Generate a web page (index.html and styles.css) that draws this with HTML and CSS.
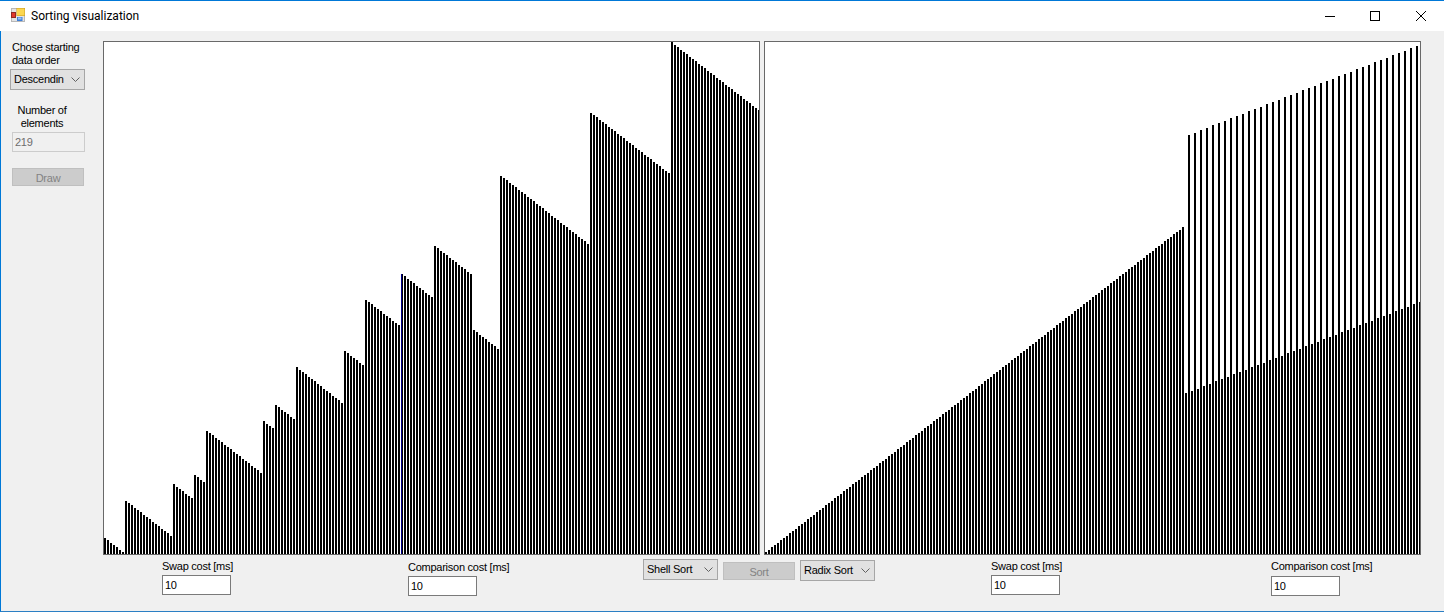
FILE: index.html
```html
<!DOCTYPE html>
<html lang="en">
<head>
<meta charset="utf-8">
<title>Sorting visualization</title>
<link rel="stylesheet" href="styles.css">
</head>
<body>
<div class="window">
  <header class="titlebar">
    <svg class="app-icon" width="16" height="16" viewBox="0 0 16 16">
      <rect x="1" y="1" width="14" height="14" fill="#b8b8b8"/>
      <rect x="2" y="2" width="12" height="12" fill="#e4e4e4"/>
      <rect x="6.5" y="1" width="8.5" height="8" fill="#c89a20"/>
      <rect x="7" y="1.5" width="7.5" height="7" fill="#fbd64f"/>
      <rect x="1" y="5" width="5" height="6" fill="#8e2a22"/>
      <rect x="2" y="6" width="3" height="4" fill="#e0382c"/>
      <rect x="7" y="10" width="5.5" height="4" fill="#3d7fd9"/>
      <rect x="8" y="10.5" width="3.5" height="2" fill="#9cc4f2"/>
    </svg>
    <span class="title">Sorting visualization</span>
    <div class="caption-buttons">
      <svg width="12" height="12" viewBox="0 0 12 12"><path d="M1 6.5H11" stroke="#000" stroke-width="1" fill="none"/></svg>
      <svg width="12" height="12" viewBox="0 0 12 12"><rect x="1.5" y="1.5" width="9" height="9" stroke="#000" stroke-width="1" fill="none"/></svg>
      <svg width="12" height="12" viewBox="0 0 12 12"><path d="M1 1L11 11M11 1L1 11" stroke="#000" stroke-width="1" fill="none"/></svg>
    </div>
  </header>
  <div class="client">
    <aside class="sidebar">
      <div class="label start-label">Chose starting<br>data order</div>
      <div class="combo order-combo"><span>Descendin</span><svg width="9" height="5" viewBox="0 0 9 5"><path d="M0.5 0.5L4.5 4.5L8.5 0.5" stroke="#606060" fill="none"/></svg></div>
      <div class="label count-label">Number of<br>elements</div>
      <input class="textbox count-box" value="219" disabled>
      <button class="action draw-button" disabled>Draw</button>
    </aside>
    <main class="main">
      <div class="charts">
        <div class="chart" id="chart-left"></div>
        <div class="chart" id="chart-right"></div>
      </div>
      <div class="controls">
        <div class="field swap-left">
          <div class="label">Swap cost [ms]</div>
          <input class="textbox" value="10">
        </div>
        <div class="field comp-left">
          <div class="label">Comparison cost [ms]</div>
          <input class="textbox" value="10">
        </div>
        <div class="combo shell-combo"><span>Shell Sort</span><svg width="9" height="5" viewBox="0 0 9 5"><path d="M0.5 0.5L4.5 4.5L8.5 0.5" stroke="#606060" fill="none"/></svg></div>
        <button class="action sort-button" disabled>Sort</button>
        <div class="combo radix-combo"><span>Radix Sort</span><svg width="9" height="5" viewBox="0 0 9 5"><path d="M0.5 0.5L4.5 4.5L8.5 0.5" stroke="#606060" fill="none"/></svg></div>
        <div class="field swap-right">
          <div class="label">Swap cost [ms]</div>
          <input class="textbox" value="10">
        </div>
        <div class="field comp-right">
          <div class="label">Comparison cost [ms]</div>
          <input class="textbox" value="10">
        </div>
      </div>
    </main>
  </div>
</div>
<script src="chart.js"></script>
</body>
</html>
```
FILE: styles.css
```css
* { box-sizing: border-box; }
html, body { margin: 0; padding: 0; background: #fff; }
body { width: 1444px; height: 613px; overflow: hidden; font: 11px/13px "Liberation Sans", Arial, sans-serif; letter-spacing: -0.25px; color: #000; }

.window { display: flex; flex-direction: column; width: 1444px; border-top: 1px solid #0078d7; }

.titlebar { display: flex; align-items: center; height: 30px; background: #fff; padding-left: 10px; }
.app-icon { display: block; margin-bottom: 2px; }
.title { margin-left: 5px; font: 12px/16px Roboto, sans-serif; letter-spacing: 0; color: #000; }
.caption-buttons { display: flex; margin-left: auto; padding-right: 17px; gap: 33px; }
.caption-buttons svg { display: block; }
.caption-buttons svg:last-child { margin-left: 1px; }

.client { display: flex; height: 581px; background: #f0f0f0; border-left: 1px solid #0078d7; border-bottom: 1px solid #2b7fc4; }

.sidebar { flex: none; width: 102px; padding-top: 10px; display: flex; flex-direction: column; align-items: flex-start; }
.label { white-space: nowrap; }
.start-label { margin-left: 11px; }

.combo { flex: none; display: flex; align-items: center; justify-content: space-between; width: 75px; height: 21px; padding: 0 4px 0 3px; background: #e1e1e1; border: 1px solid #a6a6a6; overflow: hidden; }
.combo svg { display: block; flex: none; }

.textbox { display: block; width: 69px; height: 20px; margin: 0; padding: 0 2px; background: #fff; border: 1px solid #7a7a7a; border-radius: 0; outline: 0; font: 11px/18px "Liberation Sans", Arial, sans-serif; letter-spacing: -0.25px; color: #000; }
.action { display: block; width: 72px; height: 18px; margin: 0; padding: 2px 0 0; background: #ccc; border: 1px solid #bfbfbf; border-radius: 0; font: 11px/14px "Liberation Sans", Arial, sans-serif; letter-spacing: -0.25px; color: #838383; }

.order-combo { margin: 2px 0 0 9px; }
.count-label { width: 60px; margin: 14px 0 0 11px; text-align: center; }
.count-box { width: 73px; margin: 2px 0 0 11px; background: #f0f0f0; border-color: #ccc; color: #6d6d6d; }
.count-box:disabled { opacity: 1; -webkit-text-fill-color: #6d6d6d; }
.draw-button { margin: 16px 0 0 11px; }

.main { flex: none; width: 1341px; padding-top: 10px; }
.charts { display: flex; gap: 4px; }
.chart { flex: none; display: flex; align-items: flex-end; gap: 1px; width: 657px; height: 514px; background: #fff; border: 1px solid #696969; overflow: hidden; }
.bar { flex: none; width: 2px; background: #000; }
.bar-mark { border-left: 1px solid #00008b; }

.controls { display: flex; align-items: flex-start; height: 56px; }
.field { flex: none; width: 69px; }
.swap-left { margin: 5px 0 0 59px; }
.swap-left .textbox, .swap-right .textbox { margin-top: 2px; }
.comp-left { margin: 6px 0 0 177px; }
.comp-left .textbox { margin-top: 2px; }
.shell-combo { margin: 4px 0 0 166px; }
.sort-button { flex: none; margin: 7px 0 0 5px; }
.radix-combo { margin: 5px 0 0 5px; }
.swap-right { margin: 5px 0 0 116px; }
.comp-right { margin: 5px 0 0 211px; }
.comp-right .textbox { margin-top: 3px; }
```
FILE: chart.js
```js
(function () {
  var INNER_HEIGHT = 512;
  var MAX_VALUE = 219;

  function descendingRuns(runs) {
    var values = [];
    runs.forEach(function (run) {
      for (var v = run[0]; v >= run[1]; v--) values.push(v);
    });
    return values;
  }

  function radixValues() {
    var values = [];
    for (var i = 0; i < 219; i++) {
      if (i < 140) values.push(i + 1);
      else if (i % 2 === 0) values.push(69 + (i - 140) / 2);
      else values.push(179.5 + (i - 141) / 2);
    }
    return values;
  }

  function fill(id, values, marked) {
    var chart = document.getElementById(id);
    values.forEach(function (v, i) {
      var bar = document.createElement('div');
      bar.className = i === marked ? 'bar bar-mark' : 'bar';
      bar.style.height = Math.floor(v * INNER_HEIGHT / MAX_VALUE) + 'px';
      chart.appendChild(bar);
    });
  }

  fill('chart-left', descendingRuns([
    [7, 1], [23, 8], [30, 24], [34, 31], [53, 35], [57, 54], [64, 58], [80, 65],
    [87, 81], [109, 98], [120, 110], [132, 120], [96, 88], [162, 133], [189, 163], [219, 190]
  ]), 99);
  fill('chart-right', radixValues(), -1);
})();
```
